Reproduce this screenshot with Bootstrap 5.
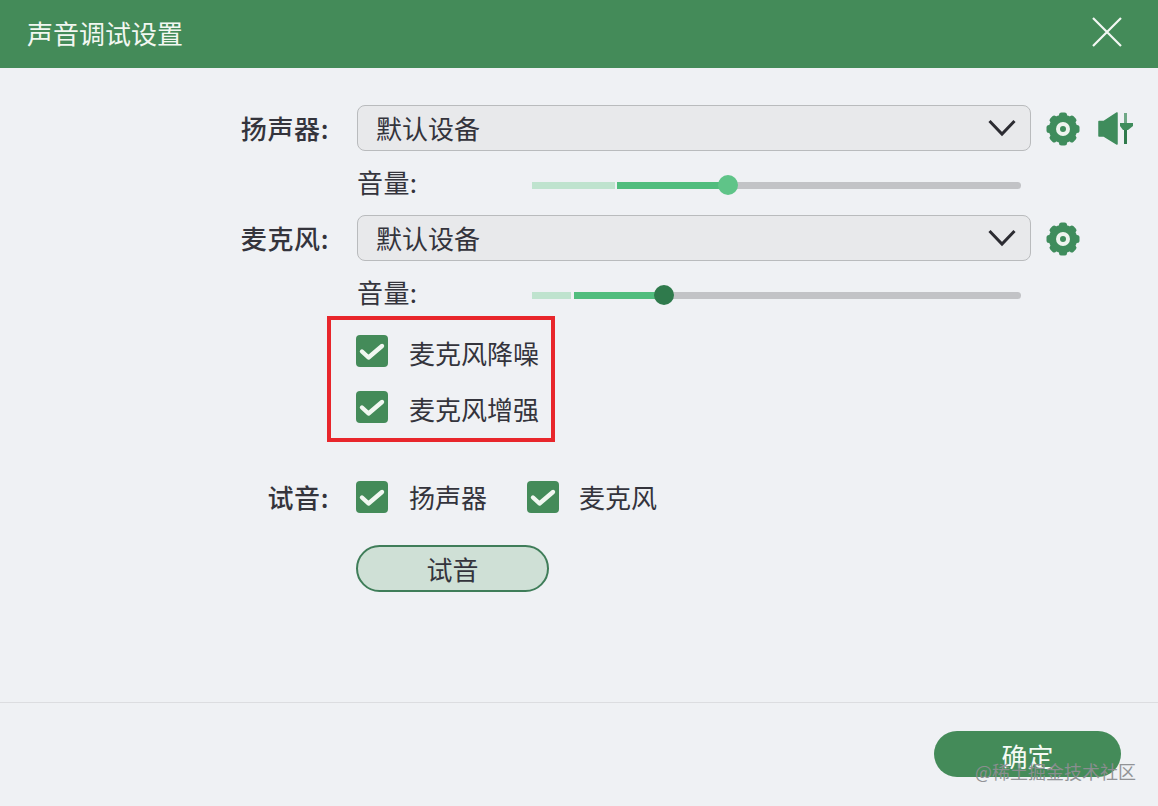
<!DOCTYPE html>
<html lang="zh">
<head>
<meta charset="utf-8">
<title>声音调试设置</title>
<link href="https://cdn.jsdelivr.net/npm/bootstrap@5.3.0/dist/css/bootstrap.min.css" rel="stylesheet">
<style>
html,body{height:100%;margin:0}
body{width:1158px;height:806px;overflow:hidden;background:#eff1f4;color:#34343c;font-family:"Noto Sans CJK SC","Noto Sans",sans-serif;font-size:26px;line-height:1.2}
.dlg{position:relative;width:1158px;height:806px}
.dlg-head{height:68px;background:#448b59;color:#f2f7f1;padding:0 36px 4px 27px}
.dlg-title{font-size:26px;font-weight:400;margin-top:2px}
.dlg-body{height:634px;padding-top:37px}
.lab-col{width:329px;flex:none;text-align:right;font-weight:500;font-size:26px;letter-spacing:.6px;margin-right:28px;white-space:nowrap}
.sel-box{width:674px;height:46px;border:1px solid #b9bbbd;border-radius:8px;background:#e8e9eb;padding:0 14px 0 18px;flex:none}
.row-sel{height:46px}
.row-vol{height:64px;padding-top:4px}
.vol-lab{width:175px;flex:none;margin-bottom:6px;letter-spacing:.4px}
.trk{width:489px;height:8px;flex:none}
.seg{height:7px;flex:none}
.seg-buf{background:#bfe3ce}
.seg-fill{background:#50bd7d}
.seg-rest{background:#c2c3c6;flex:1;border-radius:0 4px 4px 0}
.knob{width:20px;height:20px;border-radius:50%;flex:none;margin:0 -10px;position:relative}
.knob-a{background:#5fc488}
.knob-b{background:#2f7a4c}
.tool-ico{margin-left:15px;margin-top:2px;flex:none}
.spk-ico{margin-left:18px}
.red-box{width:228px;height:126px;margin:-9px 0 0 327px;border:4px solid #e8262b;padding:15px 0 0 25px}
.chk{width:32px;height:32px;border-radius:4px;background:#448b59;flex:none}
.chk-row{height:56px}
.chk-row .chk{margin-right:21px}
.chk-txt{padding-top:2px}
.opt-row{height:32px;margin-top:39px}
.opt-first{margin-left:-1px;margin-right:21px}
.opt-lab{margin-right:40px}
.opt-second{margin-right:20px}
.try-btn{display:block;width:193px;height:47px;margin:32px 0 0 356px;padding:0;border:2px solid #3f7d59;border-radius:24px;background:#cfe0d6;color:#34343c;font-size:26px;line-height:1}
.try-btn:hover{background:#cfe0d6;color:#34343c;border-color:#3f7d59}
.dlg-foot{height:104px;border-top:1px solid #dcdde0;padding:28px 37px 0 0}
.ok-btn{width:187px;height:46px;padding:3px 0 0;border:0;border-radius:23px;background:#448b59;color:#f5faf5;font-size:26px;line-height:1}
.ok-btn:hover{background:#448b59;color:#f5faf5}
.wm{position:absolute;left:975px;top:761px;font-size:18px;color:#8d8f92;white-space:nowrap;opacity:.95}
.x-ico{display:block}
.fill-a{margin-left:2px}
.fill-b{margin-left:3px}
</style>
</head>
<body>
<svg width="0" height="0" class="position-absolute">
<defs>
<symbol id="gear" viewBox="0 0 34 34">
<g fill="#3f8c5c">
<circle cx="17" cy="17" r="14.2"/>
<rect x="13" y="0.5" width="8" height="33" rx="2.5"/><rect x="13" y="0.5" width="8" height="33" rx="2.5" transform="rotate(45 17 17)"/><rect x="13" y="0.5" width="8" height="33" rx="2.5" transform="rotate(90 17 17)"/><rect x="13" y="0.5" width="8" height="33" rx="2.5" transform="rotate(135 17 17)"/>
</g>
<circle cx="17" cy="17" r="7" fill="#eef3ee"/>
<circle cx="17" cy="17" r="3" fill="#3f8c5c"/>
</symbol>
<symbol id="chev" viewBox="0 0 28 18"><path d="M1.5 2 14 15 26.5 2" fill="none" stroke="#2c2c32" stroke-width="3"/></symbol>
<symbol id="tick" viewBox="0 0 32 32"><path d="M6 16.5 12.5 22.5 26 11" fill="none" stroke="#f1f7f1" stroke-width="4.4" stroke-linecap="round" stroke-linejoin="round"/></symbol>
</defs>
</svg>
<div class="dlg">
  <header class="dlg-head d-flex align-items-center justify-content-between">
    <div class="dlg-title">声音调试设置</div>
    <svg class="x-ico" width="30" height="30" viewBox="0 0 30 30"><path d="M1 1 29 29M29 1 1 29" stroke="#f4f8f4" stroke-width="2.2" fill="none"/></svg>
  </header>
  <main class="dlg-body">
    <div class="d-flex align-items-center row-sel">
      <div class="lab-col">扬声器:</div>
      <div class="sel-box d-flex align-items-center justify-content-between"><span>默认设备</span><svg width="28" height="18"><use href="#chev"/></svg></div>
      <svg class="tool-ico" width="34" height="34"><use href="#gear"/></svg>
      <svg class="tool-ico spk-ico" width="36" height="34" viewBox="0 0 36 34"><path d="M1 9.5H6L19 1V32L6 24H1Z" fill="#3f8c5c" stroke="#3f8c5c" stroke-linejoin="round" stroke-width="1.5"/><path d="M27.5 1V13" stroke="#6fa886" stroke-width="3"/><path d="M27.5 13V32" stroke="#2f7a4c" stroke-width="3"/><path d="M22 11H35V14L30 18H25L22 14Z" fill="#3f8c5c"/></svg>
    </div>
    <div class="d-flex align-items-center row-vol">
      <div class="lab-col"></div>
      <div class="vol-lab">音量:</div>
      <div class="trk d-flex align-items-center">
        <div class="seg seg-buf" style="width:83px"></div>
        <div class="seg seg-fill fill-a" style="width:111px"></div>
        <div class="knob knob-a"></div>
        <div class="seg seg-rest"></div>
      </div>
    </div>
    <div class="d-flex align-items-center row-sel">
      <div class="lab-col">麦克风:</div>
      <div class="sel-box d-flex align-items-center justify-content-between"><span>默认设备</span><svg width="28" height="18"><use href="#chev"/></svg></div>
      <svg class="tool-ico" width="34" height="34"><use href="#gear"/></svg>
    </div>
    <div class="d-flex align-items-center row-vol">
      <div class="lab-col"></div>
      <div class="vol-lab">音量:</div>
      <div class="trk d-flex align-items-center">
        <div class="seg seg-buf" style="width:39px"></div>
        <div class="seg seg-fill fill-b" style="width:90px"></div>
        <div class="knob knob-b"></div>
        <div class="seg seg-rest"></div>
      </div>
    </div>
    <div class="red-box">
      <div class="d-flex align-items-start chk-row"><svg class="chk"><use href="#tick"/></svg><span class="chk-txt">麦克风降噪</span></div>
      <div class="d-flex align-items-start chk-row"><svg class="chk"><use href="#tick"/></svg><span class="chk-txt">麦克风增强</span></div>
    </div>
    <div class="d-flex align-items-center opt-row">
      <div class="lab-col">试音:</div>
      <svg class="chk opt-first"><use href="#tick"/></svg><span class="opt-lab">扬声器</span>
      <svg class="chk opt-second"><use href="#tick"/></svg><span>麦克风</span>
    </div>
    <button type="button" class="btn try-btn">试音</button>
  </main>
  <footer class="dlg-foot d-flex justify-content-end align-items-start">
    <button type="button" class="btn ok-btn">确定</button>
  </footer>
  <div class="wm">@稀土掘金技术社区</div>
</div>
</body>
</html>
